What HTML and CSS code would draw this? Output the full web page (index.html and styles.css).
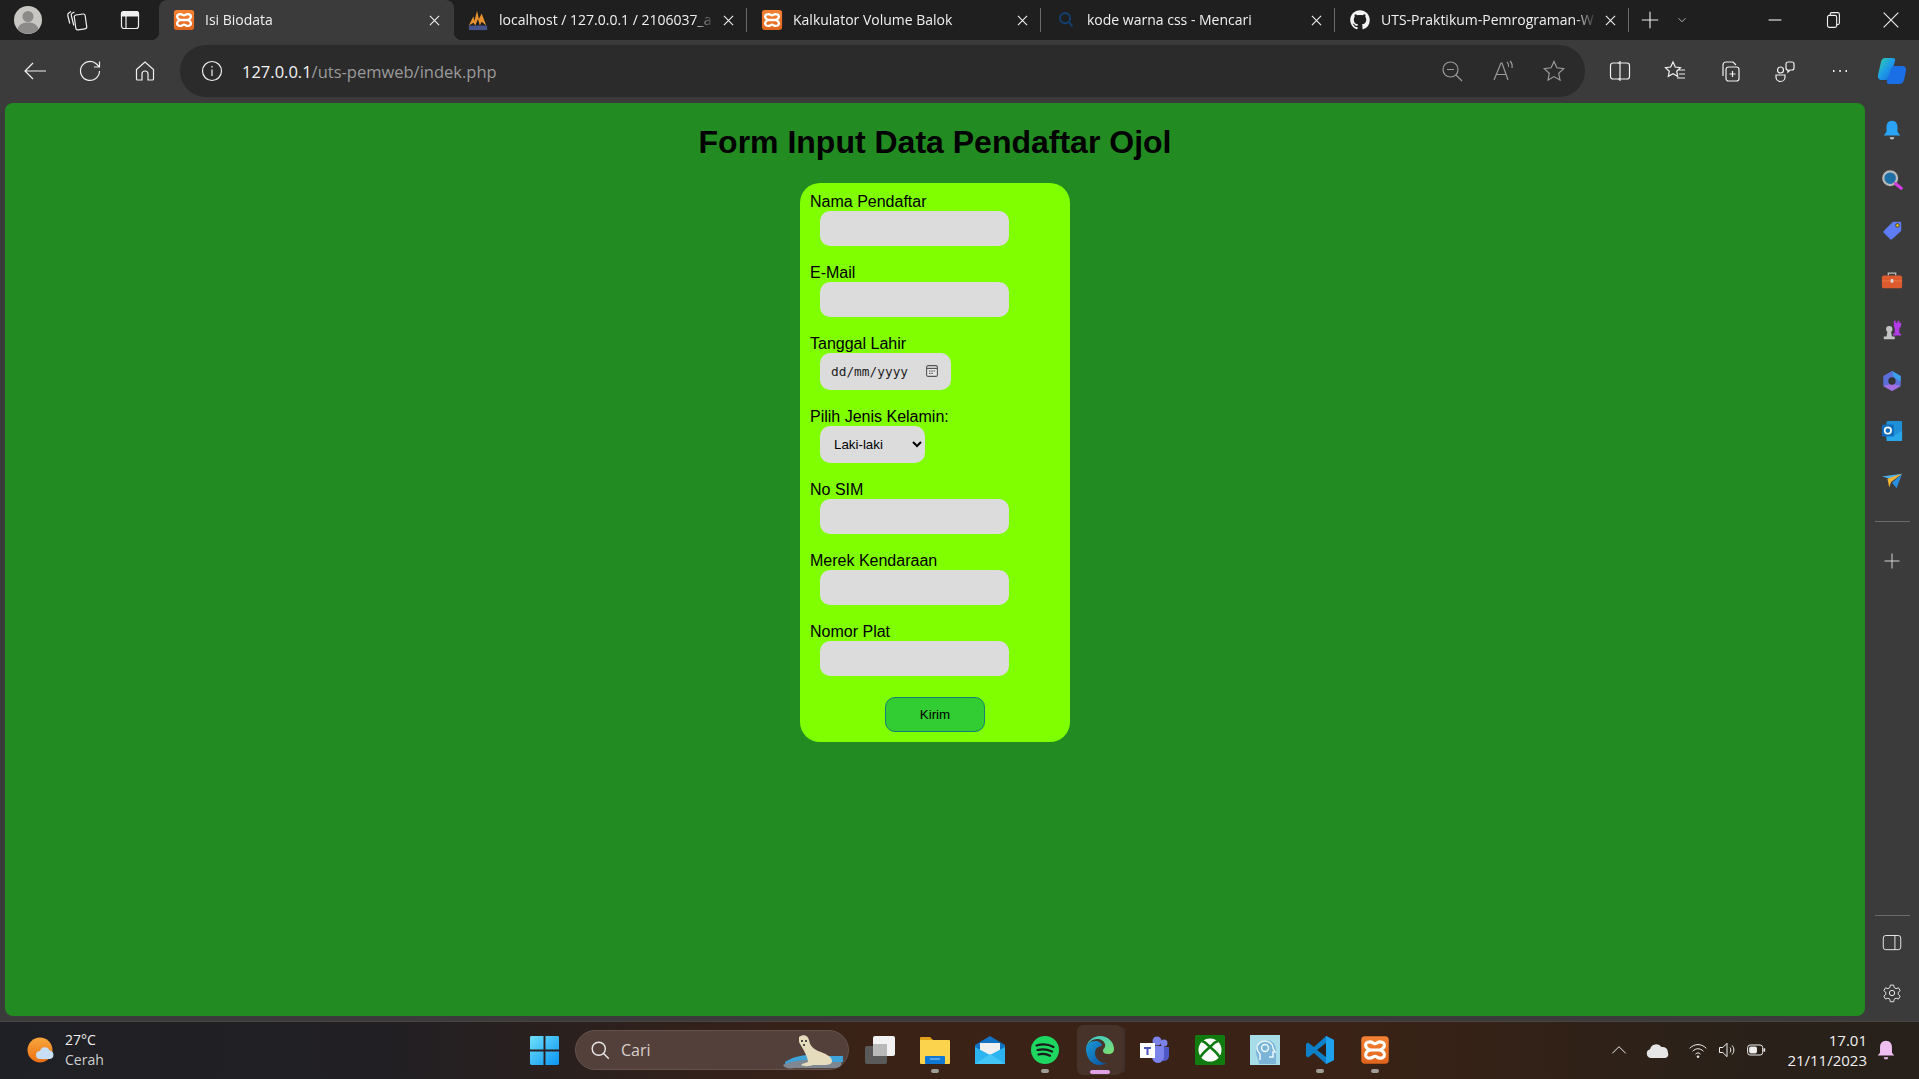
FILE: index.html
```html
<!DOCTYPE html>
<html>
<head>
  <meta charset="utf-8">
  <title>Isi Biodata</title>
  <link rel="stylesheet" href="styles.css">
</head>
<body>
  <svg class="defs" width="0" height="0">
    <defs>
      <linearGradient id="xamppBg" x1="0" y1="0" x2="0" y2="1"><stop offset="0" stop-color="#f58234"/><stop offset="1" stop-color="#e0651c"/></linearGradient>
      <linearGradient id="winBlue" x1="0" y1="0" x2="1" y2="1"><stop offset="0" stop-color="#6fe0fc"/><stop offset="1" stop-color="#0a93f0"/></linearGradient>
      <linearGradient id="edgeA" x1="0" y1="0" x2="1" y2="1"><stop offset="0" stop-color="#36c6d8"/><stop offset="1" stop-color="#7ee06a"/></linearGradient>
      <linearGradient id="edgeB" x1="0" y1="0" x2="1" y2="1"><stop offset="0" stop-color="#1a9ad6"/><stop offset="1" stop-color="#0b4f9e"/></linearGradient>
      <linearGradient id="copilot" x1="0" y1="0" x2="1" y2="1"><stop offset="0" stop-color="#2fd3a6"/><stop offset=".5" stop-color="#1d9be8"/><stop offset="1" stop-color="#1a5fd8"/></linearGradient>
      <linearGradient id="sunG" x1="0" y1="0" x2="0" y2="1"><stop offset="0" stop-color="#f7a73c"/><stop offset="1" stop-color="#ec6f14"/></linearGradient>
      <symbol id="xampp" viewBox="0 0 24 24">
        <rect x="1" y="1" width="22" height="22" rx="3" fill="url(#xamppBg)"/>
        <path d="M8 5.500C3 5.500 3.500 11 8.500 12 3.500 13 3 18.500 8 18.500c2 0 2.500-1.500 4-1.500s2 1.500 4 1.500c5 0 4.500-5.500-.5-6.500 5-1 5.500-6.500.5-6.500-2 0-2.500 1.500-4 1.500S10 5.500 8 5.500zM8.500 12h7" fill="none" stroke="#fff" stroke-width="2.5" stroke-linejoin="round"/>
      </symbol>
      <symbol id="close" viewBox="0 0 12 12"><path d="M1 1l10 10M11 1L1 11" fill="none" stroke="#f0f0f0" stroke-width="1.2"/></symbol>
    </defs>
  </svg>

  <div class="titlebar">
    <div class="avatar">
      <svg viewBox="0 0 28 28"><circle cx="14" cy="14" r="14" fill="#c9c7c4"/><circle cx="14" cy="10.5" r="5.5" fill="#8c8a88"/><path d="M3.500 23c1.500-5 5.500-6.500 10.500-6.500S23 18 24.500 23A14 14 0 0 1 3.500 23z" fill="#8c8a88"/></svg>
    </div>
    <div class="tb-btn">
      <svg class="ico" viewBox="0 0 24 24"><rect x="10" y="6.500" width="11" height="15" rx="2" transform="rotate(-8 15 14)"/><path d="M9.500 4L7.500 5c-1 .5-1.500 1.500-1.200 2.500l2.500 10M6 3.500L3.800 5c-1 .7-1.200 1.500-1 2.500l2 8"/></svg>
    </div>
    <div class="tb-btn">
      <svg class="ico" viewBox="0 0 24 24"><rect x="3.500" y="3.500" width="17" height="17" rx="2.500"/><path d="M3.500 7.500V6a2.500 2.500 0 0 1 2.500-2.500h12A2.500 2.500 0 0 1 20.500 6v2h-17z" fill="#f0f0f0"/><path d="M8 8v12"/></svg>
    </div>
    <div class="tabs">
      <div class="tab tab-active">
        <svg class="favicon"><use href="#xampp"/></svg>
        <span class="tab-title">Isi Biodata</span>
        <svg class="tab-close"><use href="#close"/></svg>
      </div>
      <div class="tab tab-after">
        <svg class="favicon" viewBox="0 0 24 24"><path d="M2 18L7 8l1 5 3-11 2 9 3-6 5 13-5-4-2 4-2-7-3 7-2-3z" fill="#e8922e"/><rect x="2" y="18" width="20" height="5" fill="#46558c"/></svg>
        <span class="tab-title">localhost / 127.0.0.1 / 2106037_a</span>
        <svg class="tab-close"><use href="#close"/></svg>
      </div>
      <div class="tab">
        <svg class="favicon"><use href="#xampp"/></svg>
        <span class="tab-title">Kalkulator Volume Balok</span>
        <svg class="tab-close"><use href="#close"/></svg>
      </div>
      <div class="tab">
        <svg class="favicon" viewBox="0 0 24 24"><circle cx="11" cy="10" r="5.5" fill="none" stroke="#123f6e" stroke-width="2.2"/><path d="M15 14l4 5" stroke="#123f6e" stroke-width="2.2"/></svg>
        <span class="tab-title">kode warna css - Mencari</span>
        <svg class="tab-close"><use href="#close"/></svg>
      </div>
      <div class="tab">
        <svg class="favicon" viewBox="-1 -1 18 18"><path fill="#f4f4f4" d="M8 0C3.580 0 0 3.580 0 8c0 3.540 2.290 6.530 5.470 7.590.4.070.55-.17.55-.38 0-.19-.01-.82-.01-1.490-2.010.37-2.530-.49-2.690-.94-.09-.23-.48-.94-.82-1.130-.28-.15-.68-.52-.01-.53.63-.01 1.080.58 1.230.82.72 1.210 1.870.87 2.330.66.07-.52.28-.87.51-1.070-1.780-.2-3.640-.89-3.640-3.950 0-.87.31-1.590.82-2.150-.08-.2-.36-1.020.08-2.120 0 0 .67-.21 2.200.82.64-.18 1.320-.27 2-.27.68 0 1.360.09 2 .27 1.530-1.040 2.200-.82 2.200-.82.44 1.100.16 1.920.08 2.120.51.56.82 1.270.82 2.150 0 3.070-1.870 3.750-3.650 3.950.29.25.54.73.54 1.480 0 1.070-.01 1.930-.01 2.200 0 .21.15.46.55.38A8.013 8.013 0 0 0 16 8c0-4.420-3.580-8-8-8z"/></svg>
        <span class="tab-title">UTS-Praktikum-Pemrograman-W</span>
        <svg class="tab-close"><use href="#close"/></svg>
      </div>
    </div>
    <svg class="ico newtab" viewBox="0 0 24 24"><path d="M12 3v18M3 12h18"/></svg>
    <svg class="ico tabmenu" viewBox="0 0 24 24"><path d="M6 9l6 6 6-6"/></svg>
    <div class="winctl">
      <svg class="ico win-ico" viewBox="0 0 24 24"><path d="M5 12h14"/></svg>
      <svg class="ico win-ico" viewBox="0 0 24 24"><rect x="6" y="7" width="10" height="13" rx="2"/><path d="M9 7V5.500A1.500 1.500 0 0 1 10.500 4H17a2 2 0 0 1 2 2v9a2 2 0 0 1-2 2h-1"/></svg>
      <svg class="ico win-ico" viewBox="0 0 24 24"><path d="M4 4l16 16M20 4L4 20"/></svg>
    </div>
  </div>

  <div class="toolbar">
    <div class="tb-nav">
      <div class="nav-btn"><svg class="ico" viewBox="0 0 24 24"><path d="M23 12H2M10 4l-8 8 8 8"/></svg></div>
      <div class="nav-btn"><svg class="ico" viewBox="0 0 24 24"><path d="M21.500 12a9.500 9.500 0 1 1-3-7l3 3M21.500 2.500V8H16"/></svg></div>
      <div class="nav-btn"><svg class="ico" viewBox="0 0 24 24"><path d="M3.500 10.500L12 3l8.500 7.500V20a1 1 0 0 1-1 1H15v-6a3 3 0 0 0-6 0v6H4.500a1 1 0 0 1-1-1z"/></svg></div>
    </div>
    <div class="urlbar">
      <svg class="ico" viewBox="0 0 24 24"><circle cx="12" cy="12" r="9.5"/><path d="M12 10.500V17"/><path d="M12 7v1.500"/></svg>
      <span class="url"><span class="url-host">127.0.0.1</span>/uts-pemweb/indek.php</span>
      <div class="url-actions">
        <svg class="ico dim" viewBox="0 0 24 24"><circle cx="10.5" cy="10.5" r="7.5"/><path d="M16 16l6 6M7 10.500h7"/></svg>
        <svg class="ico dim" viewBox="0 0 24 24"><path d="M3 21L10 4h1l6 17M5.500 15.500h9.500M16 3c1.500 1.500 2 3 1.500 5M19 2c2 2 2.500 4.500 2 7"/></svg>
        <svg class="ico dim" viewBox="0 0 24 24"><path d="M12 2.500l2.900 6.300 6.800.8-5 4.700 1.300 6.700-6-3.400-6 3.400 1.300-6.700-5-4.700 6.800-.8z"/></svg>
      </div>
    </div>
    <div class="tb-right">
      <div class="nav-btn"><svg class="ico" viewBox="0 0 24 24"><rect x="2.500" y="4" width="19" height="16" rx="2.5"/><path d="M12 2v20M12 4h-2M12 20h-2"/></svg></div>
      <div class="nav-btn"><svg class="ico" viewBox="0 0 24 24"><path d="M10 3l2.300 5 5.200.6-3.800 3.600 1 5.200L10 14.800 5.300 17.400l1-5.200L2.500 8.600 7.700 8zM15 11h7M16 15h6M14 19h8"/></svg></div>
      <div class="nav-btn"><svg class="ico" viewBox="0 0 24 24"><rect x="8" y="8" width="13" height="14" rx="2.5"/><path d="M14.500 12v6M11.500 15h6M5 17V6a3 3 0 0 1 3-3h7l3 3"/></svg></div>
      <div class="nav-btn"><svg class="ico" viewBox="0 0 24 24"><circle cx="7.5" cy="11" r="3"/><path d="M13 5a2 2 0 0 1 2-2h4a2 2 0 0 1 2 2v4a2 2 0 0 1-2 2h-2l-2 2v-2a2 2 0 0 1-2-2zM3 16h9v2a4.500 4.500 0 0 1-9 0z"/></svg></div>
      <div class="nav-btn"><svg class="ico" viewBox="0 0 24 24"><path d="M5 12h1.500M11.300 12h1.500M17.500 12H19" stroke-width="2"/></svg></div>
      <div class="nav-btn nav-last"><svg class="copilot" viewBox="0 0 30 30"><path d="M8 2h8c2 0 2.500 1.500 2 3l-4 14c-.8 3-2 5-5 5H5c-3 0-4.500-2-4-5L4 6c.6-2.500 2-4 4-4z" fill="url(#copilot)"/><path d="M18 10h7c3 0 4.500 2 4 5l-2 9c-.7 2.500-2.500 4-5 4H12c-2 0-2.500-1.500-2-3l4-12c.7-2 2-3 4-3z" fill="#1a6fe6"/></svg></div>
    </div>
  </div>

  <div class="main">
    <div class="page">
      <h1>Form Input Data Pendaftar Ojol</h1>
      <form class="card">
        <label>Nama Pendaftar</label>
        <input type="text" name="nama">
        <label>E-Mail</label>
        <input type="text" name="email">
        <label>Tanggal Lahir</label>
        <div class="date-box">
          <input type="text" name="tanggal" placeholder="dd/mm/yyyy">
          <svg viewBox="0 0 12 12"><rect x=".6" y=".6" width="10.800" height="10.800" rx="1.500" fill="#e6e6e6" stroke="#555" stroke-width="1.100"/><path d="M1 3.400h10" stroke="#555" stroke-width="1.200"/><path d="M3 6h1.500M5.300 6h1.500M7.600 6h1.500M3 8.300h1.500M5.300 8.300h1.500" stroke="#444"/></svg>
        </div>
        <label>Pilih Jenis Kelamin:</label>
        <select name="jk"><option>Laki-laki</option><option>Perempuan</option></select>
        <label>No SIM</label>
        <input type="text" name="sim">
        <label>Merek Kendaraan</label>
        <input type="text" name="merek">
        <label>Nomor Plat</label>
        <input type="text" name="plat">
        <button type="button">Kirim</button>
      </form>
    </div>
    <div class="sidebar">
      <div class="side-btn"><svg viewBox="0 0 24 24"><path d="M12 2c4 0 6 3 6 7v5l3 4H3l3-4V9c0-4 2-7 6-7z" fill="#2aa3f5"/><path d="M9.500 20h5l-1 2h-3z" fill="#cfcfcf"/></svg></div>
      <div class="side-btn"><svg viewBox="0 0 24 24"><circle cx="10" cy="10" r="7.5" fill="#1d6fa5" stroke="#b8b8b8" stroke-width="2.5"/><path d="M16 16l6 5" stroke="#d23ee0" stroke-width="3.5" stroke-linecap="round"/></svg></div>
      <div class="side-btn"><svg viewBox="0 0 24 24"><path d="M13 3h8a1 1 0 0 1 1 1v9L12 22a1.500 1.500 0 0 1-2 0l-7-7a1.500 1.500 0 0 1 0-2z" fill="#5d7cf5"/><circle cx="18" cy="7" r="2" fill="#f5c518" stroke="#333"/></svg></div>
      <div class="side-btn"><svg viewBox="0 0 24 24"><path d="M8 7V4.500h8V7" fill="none" stroke="#bdbdbd" stroke-width="1.5"/><rect x="1" y="7" width="22" height="14" rx="2" fill="#dc5a2e"/><path d="M1 13h22" stroke="#f07a45"/><rect x="10.5" y="11" width="3" height="4" rx="1" fill="#d8d8d8"/></svg></div>
      <div class="side-btn"><svg viewBox="0 0 24 24"><circle cx="9" cy="11" r="3.5" fill="#c4c4c4"/><path d="M7 14h4l1 5H6zM3 19h12v3H3z" fill="#c4c4c4"/><path d="M14 2h2v2h2V2h2v2h2V2v6l-2 2v5l2 2v1h-9v-1l2-2v-5l-1-2z" fill="#b13ce6"/></svg></div>
      <div class="side-btn"><svg viewBox="0 0 24 24"><path d="M12 1l9.500 5.500v11L12 23l-9.500-5.500v-11z" fill="#5b6fd8"/><path d="M12 1l9.500 5.500v6L14 8z" fill="#3aa0e8"/><path d="M2.500 17.500L12 23l9.500-5.500L12 15z" fill="#a36fe0"/><circle cx="12" cy="12" r="4" fill="#333"/></svg></div>
      <div class="side-btn"><svg viewBox="0 0 24 24"><rect x="6" y="1" width="17" height="20" rx="1.500" fill="#1f8fd8"/><path d="M6 13l8.500 4 8.500-5v10a1 1 0 0 1-1 1H7a1 1 0 0 1-1-1z" fill="#28a8ea"/><rect x="1" y="5" width="13" height="13" rx="1.500" fill="#0f6cbd"/><circle cx="7.5" cy="11.5" r="3.5" fill="none" stroke="#fff" stroke-width="1.8"/></svg></div>
      <div class="side-btn"><svg viewBox="0 0 24 24"><path d="M1 7l22-3-11 6z" fill="#4db2f0"/><path d="M23 4L17 20l-5-6z" fill="#2a8fe0"/><path d="M7 9.500L23 4 11 13l-2 6z" fill="#f2b233"/></svg></div>
      <div class="side-line"></div>
      <div class="side-btn"><svg class="ico thin" viewBox="0 0 24 24"><path d="M12 2v20M2 12h20"/></svg></div>
      <div class="side-bottom">
        <div class="side-line"></div>
        <div class="side-btn"><svg class="ico thin" viewBox="0 0 24 24"><rect x="1.500" y="3" width="21" height="17" rx="3"/><path d="M15.500 3v17"/></svg></div>
        <div class="side-btn"><svg class="ico thin" viewBox="0 0 24 24"><circle cx="12" cy="12" r="3.2"/><path d="M10 2.500h4l.6 3 2.300 1.300 2.900-1 2 3.400-2.300 2v2.600l2.300 2-2 3.400-2.900-1-2.300 1.300-.6 3h-4l-.6-3-2.300-1.300-2.900 1-2-3.400 2.300-2v-2.600l-2.300-2 2-3.400 2.900 1L9.400 5.500z"/></svg></div>
      </div>
    </div>
  </div>

  <div class="taskbar">
    <div class="weather">
      <svg viewBox="0 0 28 28"><circle cx="13" cy="14" r="12.5" fill="url(#sunG)"/><path d="M13 23a4 4 0 0 1 0-8 5 5 0 0 1 9.500-.5A4.300 4.300 0 0 1 23 23z" fill="#c7def4"/></svg>
      <div class="weather-text"><span>27°C</span><span class="dimtext">Cerah</span></div>
    </div>
    <div class="task-btn">
      <svg class="win" viewBox="0 0 30 30"><path d="M0 1.500A1.500 1.500 0 0 1 1.500 0H14v14H0zM16 0h12.500A1.500 1.500 0 0 1 30 1.500V14H16zM0 16h14v14H1.500A1.500 1.500 0 0 1 0 28.500zM16 16h14v12.500a1.500 1.500 0 0 1-1.500 1.500H16z" fill="url(#winBlue)"/></svg>
    </div>
    <div class="search">
      <svg class="ico search-ico" viewBox="0 0 24 24"><circle cx="10" cy="10" r="7.5"/><path d="M15.500 15.500l6 6"/></svg>
      <span>Cari</span>
      <svg class="seal" viewBox="0 0 64 36"><path d="M2 31c6-4 14-5 22-5l36 2c2 3-2 6-6 6H14C8 35 3 34 2 31z" fill="#7f8792"/><path d="M4 28c8-5 16-7 24-7v5C18 26 10 28 4 30z" fill="#3ea3d8"/><path d="M46 22h16v6H48z" fill="#3ea3d8"/><path d="M18 3c4-3 9-2 10 3 1 5 3 8 9 11 6 2 14 5 14 10 0 3-3 4-8 4H32c-2 1-9 2-12 0 2-2 5-2 7-3 0-5-5-13-9-20z" fill="#e4dcbc"/><circle cx="21" cy="7" r="1" fill="#222"/><circle cx="25" cy="7" r="1" fill="#222"/><circle cx="23" cy="11" r="1" fill="#222"/></svg>
    </div>
    <div class="task-icons">
      <div class="task-btn"><svg viewBox="0 0 30 30"><rect x="0" y="11" width="22" height="18" rx="2" fill="#5a5a5a"/><rect x="8" y="1" width="22" height="20" rx="2" fill="#f2f2f2"/><rect x="8" y="9" width="14" height="12" fill="#b9b9b9"/></svg></div>
      <div class="task-btn running"><svg viewBox="0 0 30 30"><path d="M0 3a1 1 0 0 1 1-1h9l3 3H0z" fill="#e0a21b"/><path d="M0 5h29a1 1 0 0 1 1 1v22a1 1 0 0 1-1 1H1a1 1 0 0 1-1-1z" fill="#fcd34d"/><rect x="5" y="21" width="20" height="8" rx="1" fill="#0f78d4"/><path d="M10 24h10" stroke="#9fd4fa"/></svg></div>
      <div class="task-btn"><svg viewBox="0 0 30 30"><path d="M0 10L15 1l15 9v19H0z" fill="#1272c4"/><path d="M5 8h20v9l-10 5-10-5z" fill="#f0f0f0"/><path d="M0 12l15 8 15-8v17H0z" fill="#2bb4f0"/><path d="M0 29l15-10 15 10z" fill="#43c6f7"/></svg></div>
      <div class="task-btn running"><svg viewBox="0 0 30 30"><circle cx="15" cy="15" r="14" fill="#1ed760"/><path d="M6.500 10.500c6-1.800 12-1.300 17 1.500M7.500 15c5-1.300 10-.8 14.500 1.500M8.500 19.500c4-1 8-.6 11.500 1.200" fill="none" stroke="#1a1a1a" stroke-width="2.2" stroke-linecap="round"/></svg></div>
      <div class="task-btn edge-active"><svg viewBox="0 0 30 30"><path d="M1 14C2 6 8 1 15 1c8 0 14 6 14 13 0 3-2 5-6 5-3 0-5-1-5-3 0-3 3-3 2-7-1-3-4-5-8-5C7 4 2 8 1 14z" fill="url(#edgeA)"/><path d="M1 14c0-5 4-8 9-8 4 0 7 2 7 5-3 0-7 2-7 7 0 6 6 11 12 10-2 1-5 2-8 2C7 30 1 23 1 14z" fill="url(#edgeB)"/></svg></div>
      <div class="task-btn"><svg viewBox="0 0 30 30"><circle cx="24" cy="8" r="3.5" fill="#7b83eb"/><circle cx="17" cy="6" r="4.5" fill="#7b83eb"/><path d="M20 12h9v9a5 5 0 0 1-5 5h-1z" fill="#5059c9"/><path d="M10 11h14v11a6 6 0 0 1-12 0z" fill="#7b83eb"/><rect x="0" y="8" width="15" height="15" fill="#fff"/><path d="M4 12h7v2H8.500v6h-2v-6H4z" fill="#4b53bc"/></svg></div>
      <div class="task-btn"><svg viewBox="0 0 30 30"><rect width="30" height="30" rx="1.5" fill="#107c10"/><circle cx="15" cy="15" r="11.5" fill="#fff"/><path d="M7 6c4 1 6 4 8 6 2-2 4-5 8-6M5.500 22c2-4 6-7 9.500-10 3.500 3 7.500 6 9.500 10" fill="none" stroke="#107c10" stroke-width="2.6"/></svg></div>
      <div class="task-btn"><svg viewBox="0 0 30 30"><rect width="30" height="30" fill="#a6dde8"/><path d="M9 29c0-5-3-7-3-13C6 9 11 5 16 5c6 0 10 4 10 10v14z" fill="#7cb4d8"/><path d="M10 25v-6c-2-2-3-4-3-6 0-4 4-7 8-7s8 3 8 7l2 4h-2v5h-4" fill="none" stroke="#eaf8fb" stroke-width="1.5"/><circle cx="15" cy="13" r="3.5" fill="none" stroke="#eaf8fb" stroke-width="1.5"/></svg></div>
      <div class="task-btn running"><svg viewBox="0 0 30 30"><path d="M21 1l8 4v20l-8 4-12-11-6 4.500L1 21V9l2-1.500L9 12z" fill="#0e7fc9"/><path d="M21 1l8 4v20l-8 4z" fill="#1ea2ed"/><path d="M21 8v14l-9-7z" fill="#2d2018"/></svg></div>
      <div class="task-btn running"><svg viewBox="0 0 30 30"><use href="#xampp"/></svg></div>
    </div>
    <div class="tray">
      <svg class="ico tray-ico chevron" viewBox="0 0 24 24"><path d="M4 16l8-8 8 8"/></svg>
      <svg class="cloud" viewBox="0 0 24 24"><path d="M6 20a4.500 4.500 0 0 1-1-8.800A6.500 6.500 0 0 1 16.500 9 5.500 5.500 0 0 1 23 15c1 2-.5 5-3 5z" fill="#e6e6e6"/></svg>
      <svg class="ico tray-ico" viewBox="0 0 24 24"><path d="M2 10c6-6 14-6 20 0M5.500 13.500c4-4 9-4 13 0M9 17c2-2 4-2 6 0"/><circle cx="12" cy="20" r="1" fill="#f0f0f0"/></svg>
      <svg class="ico tray-ico" viewBox="0 0 24 24"><path d="M3 9h4l5-5v16l-5-5H3zM15.500 9c1.500 2 1.500 4 0 6M18 6.500c3 3.500 3 7.500 0 11"/></svg>
      <svg class="ico tray-ico" viewBox="0 0 24 24"><rect x="2" y="6" width="18" height="12" rx="3"/><rect x="4.5" y="8.5" width="8" height="7" rx="1" fill="#f0f0f0"/><path d="M22 10v4" stroke-width="2"/></svg>
      <div class="clock"><span>17.01</span><span>21/11/2023</span></div>
      <svg class="bell" viewBox="0 0 24 24"><path d="M12 2c4 0 6.500 3 6.500 7v6l2.500 3H3l2.500-3V9C5.500 5 8 2 12 2z" fill="#f0bff2"/><path d="M9.500 20h5l-1 2h-3z" fill="#f0bff2"/></svg>
    </div>
  </div>
</body>
</html>
```

FILE: styles.css
```css
* {
  box-sizing: border-box;
}
html, body {
  margin: 0;
  height: 1079px;
  overflow: hidden;
}
body {
  display: flex;
  flex-direction: column;
  background: #3b3b3b;
  color: #f0f0f0;
  font-family: "Open Sans", "Noto Sans", sans-serif;
}
.defs {
  display: block;
  height: 0;
}
.ico {
  width: 24px;
  height: 24px;
  fill: none;
  stroke: #f0f0f0;
  stroke-width: 1.2;
  flex: none;
}
.ico.dim {
  stroke: #9a9a9a;
}

/* title bar + tabs */
.titlebar {
  height: 40px;
  flex: none;
  display: flex;
  align-items: center;
  background: #1f1f1f;
}
.avatar {
  width: 28px;
  height: 28px;
  margin: 0 21px 0 14px;
}
.avatar svg {
  display: block;
}
.tb-btn {
  width: 53px;
  padding-left: 2px;
  display: flex;
}
.tb-btn + .tb-btn {
  width: 43px;
}
.tabs {
  display: flex;
  align-self: stretch;
  width: 1469px;
}
.tab {
  position: relative;
  width: 294px;
  flex: none;
  display: flex;
  align-items: center;
  padding-left: 14px;
  font-size: 14px;
  color: #f0f0f0;
}
.tab:not(.tab-active)::after {
  content: "";
  position: absolute;
  right: 0;
  top: 8px;
  bottom: 8px;
  width: 1px;
  background: #6a6a6a;
}
.tab-active {
  background: #3b3b3b;
  border-radius: 8px 8px 0 0;
  width: 295px;
}
.tab-active::before,
.tab-active::after {
  content: "";
  position: absolute;
  bottom: 0;
  width: 8px;
  height: 8px;
}
.tab-active::before {
  left: -8px;
  background: radial-gradient(circle at 0 0, transparent 8px, #3b3b3b 8.5px);
}
.tab-active::after {
  right: -8px;
  background: radial-gradient(circle at 100% 0, transparent 8px, #3b3b3b 8.5px);
}
.tab-after {
  width: 293px;
  padding-left: 13px;
}
.favicon {
  width: 22px;
  height: 22px;
  flex: none;
  margin-right: 10px;
}
.tab-title {
  width: 216px;
  flex: none;
  margin-bottom: 2px;
  white-space: nowrap;
  overflow: hidden;
  -webkit-mask-image: linear-gradient(to right, #000 90%, transparent);
  mask-image: linear-gradient(to right, #000 90%, transparent);
}
.tab-close {
  width: 11px;
  height: 11px;
  flex: none;
  margin-left: 8px;
}
.newtab {
  width: 22px;
  height: 22px;
  margin-left: 11px;
}
.tabmenu {
  width: 14px;
  height: 14px;
  margin-left: 14px;
}
.winctl {
  display: flex;
  margin-left: 75px;
  gap: 36px;
}
.win-ico {
  width: 22px;
  height: 22px;
}

/* toolbar */
.toolbar {
  height: 62px;
  flex: none;
  display: flex;
  align-items: center;
  background: #3b3b3b;
  padding-left: 7px;
}
.tb-nav,
.tb-right {
  display: flex;
  flex: none;
}
.nav-btn {
  width: 55px;
  height: 40px;
  display: flex;
  align-items: center;
  justify-content: center;
}
.nav-last {
  width: 49px;
}
.urlbar {
  width: 1405px;
  height: 52px;
  margin: 0 7px 0 8px;
  padding-left: 20px;
  display: flex;
  align-items: center;
  background: #2b2b2b;
  border-radius: 26px;
  flex: none;
}
.url {
  margin-left: 18px;
  font-size: 16.5px;
  color: #9a9a9a;
}
.url-host {
  color: #f4f4f4;
}
.url-actions {
  margin-left: auto;
  margin-right: 19px;
  display: flex;
  gap: 27px;
}
.copilot {
  width: 30px;
  height: 30px;
}

/* page area */
.main {
  flex: 1;
  display: flex;
  min-height: 0;
}
.page {
  width: 1860px;
  margin: 1px 0 5px 5px;
  background: #228b22;
  border-radius: 8px;
  color: #000;
  font-family: "Liberation Sans", Arial, sans-serif;
  display: flow-root;
}
h1 {
  font-size: 32px;
  font-weight: bold;
  text-align: center;
  margin: 21.44px 0;
  line-height: 37px;
}
.card {
  width: 270px;
  margin: 0 auto;
  padding: 10px;
  background: #7fff00;
  border-radius: 20px;
}
.card label {
  display: block;
  height: 18px;
  font-size: 16px;
  line-height: 18px;
}
.card input,
.card select {
  display: block;
  margin: 0 0 18px 10px;
  border: none;
  border-radius: 10px;
  background: #dcdcdc;
  color: #000;
  padding: 10px;
  font-family: "Liberation Sans", Arial, sans-serif;
  font-size: 13.333px;
}
.card input {
  width: 189px;
  height: 35px;
}
.card select {
  width: 105px;
  height: 37px;
}
.card input:last-of-type {
  margin-bottom: 0;
}
.date-box {
  width: 131px;
  height: 37px;
  margin: 0 0 18px 10px;
  padding: 0 13px 0 11px;
  display: flex;
  align-items: center;
  justify-content: space-between;
  background: #dcdcdc;
  border-radius: 10px;
}
.date-box svg {
  width: 12px;
  height: 12px;
  flex: none;
}
.card .date-box input {
  width: 80px;
  height: 20px;
  margin: 0;
  padding: 0;
  background: none;
  border-radius: 0;
  font-family: "DejaVu Sans Mono", monospace;
  font-size: 12.8px;
}
.date-box input::placeholder {
  color: #1c1c1c;
  opacity: 1;
}
.card button {
  display: block;
  width: 100px;
  height: 35px;
  margin: 21px auto 0;
  border: 1px solid #177f75;
  border-radius: 10px;
  background: #32cd32;
  color: #000;
  font-family: "Liberation Sans", Arial, sans-serif;
  font-size: 13.333px;
}

/* edge sidebar */
.sidebar {
  width: 54px;
  flex: none;
  display: flex;
  flex-direction: column;
  align-items: center;
  padding: 3px 0;
}
.side-btn {
  width: 24px;
  height: 50.1px;
  flex: none;
  display: flex;
  align-items: center;
  justify-content: center;
}
.side-btn svg {
  width: 22px;
  height: 22px;
}
.side-btn svg.thin {
  width: 18px;
  height: 18px;
}
.side-bottom .side-btn svg.thin {
  width: 20px;
  height: 20px;
}
.side-line {
  width: 35px;
  height: 1px;
  background: #6a6a6a;
  margin: 15px 0 14px;
  flex: none;
}
.side-bottom {
  margin-top: auto;
  display: flex;
  flex-direction: column;
  align-items: center;
}
.side-bottom .side-line {
  margin: 0 0 2px;
}
.thin {
  stroke: #e4e4e4;
}

/* windows taskbar */
.taskbar {
  height: 58px;
  flex: none;
  padding-bottom: 1px;
  display: flex;
  align-items: center;
  position: relative;
  border-top: 1px solid #4a4543;
  background: linear-gradient(to right, #1f2025 0, #211f23 20%, #3a2216 45%, #3a2216 70%, #2a2119 90%, #27211b 100%);
  font-size: 14px;
}
.weather {
  width: 517px;
  padding-left: 27px;
  display: flex;
  align-items: center;
  gap: 10px;
  flex: none;
}
.weather svg {
  width: 28px;
  height: 28px;
}
.weather-text {
  display: flex;
  flex-direction: column;
  line-height: 20px;
}
.dimtext {
  color: #cfcfcf;
}
.task-btn {
  width: 55px;
  height: 50px;
  flex: none;
  position: relative;
  display: flex;
  align-items: center;
  justify-content: center;
}
.task-btn svg {
  width: 30px;
  height: 30px;
}
.task-btn .win {
  width: 29px;
  height: 29px;
}
.search {
  width: 274px;
  height: 40px;
  flex: none;
  margin-left: 3px;
  padding-left: 14px;
  display: flex;
  align-items: center;
  gap: 10px;
  border-radius: 20px;
  background: #53403a;
  border: 1px solid #64524b;
  color: #d8d0cc;
  font-size: 16px;
  position: relative;
}
.search-ico {
  width: 21px;
  height: 21px;
  stroke: #e8e8e8;
  stroke-width: 1.6;
}
.seal {
  position: absolute;
  right: 3px;
  top: 3px;
  width: 64px;
  height: 36px;
}
.task-icons {
  display: flex;
  margin-left: 3px;
}
.running::after {
  content: "";
  position: absolute;
  left: 23.5px;
  bottom: 2px;
  width: 8px;
  height: 4px;
  border-radius: 2px;
  background: #a09c98;
}
.edge-active {
  background: #473329;
  border-radius: 6px;
  width: 45px;
  margin: 0 5px;
  box-shadow: 5px 0 0 -2px #42302a;
}
.edge-active::after {
  content: "";
  position: absolute;
  left: 12.5px;
  bottom: 1px;
  width: 20px;
  height: 4px;
  border-radius: 2px;
  background: #dfa0e6;
}
.tray {
  position: absolute;
  right: 0;
  top: 0;
  bottom: 1px;
  width: 319px;
  display: flex;
  align-items: center;
}
.tray-ico {
  width: 20px;
  height: 20px;
}
.chevron {
  margin-left: 9px;
}
.cloud {
  width: 24px;
  height: 24px;
  margin: 0 19px 0 16px;
}
.tray .tray-ico + .tray-ico {
  margin-left: 9px;
}
.clock {
  margin-left: 13px;
  width: 88px;
  display: flex;
  flex-direction: column;
  align-items: flex-end;
  line-height: 20px;
  font-size: 15px;
  white-space: nowrap;
}
.bell {
  width: 22px;
  height: 22px;
  margin-left: 8px;
}
```
